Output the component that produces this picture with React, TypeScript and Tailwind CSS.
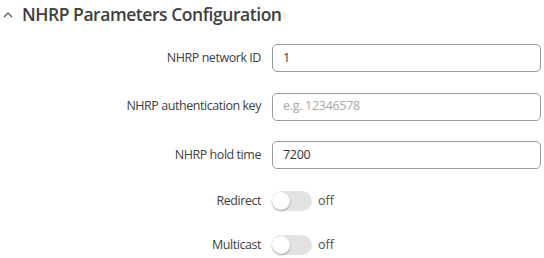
import React from "react";

function InputRow({ label, value, placeholder, h }: { label: string; value?: string; placeholder?: string; h: string }) {
  return (
    <div className={`flex items-center ${h}`}>
      <div className="w-[272px] pr-[11px] text-right text-[12.5px] tracking-[-0.45px] text-[#404040]">{label}</div>
      <div className="w-[269px] h-[28px] rounded-[5px] border border-[#9a9a9a] flex items-center px-[10px] text-[12.5px] tracking-[-0.3px]">
        {value ? <span className="text-[#333]">{value}</span> : <span className="text-[#a8a8a8]">{placeholder}</span>}
      </div>
    </div>
  );
}

function ToggleRow({ label, h }: { label: string; h: string }) {
  return (
    <div className={`flex items-center ${h}`}>
      <div className="w-[272px] pr-[11px] text-right text-[12.5px] tracking-[-0.45px] text-[#404040]">{label}</div>
      <div className="relative w-[40px] h-[20px] rounded-full bg-[#e2e2e2]">
        <div className="absolute left-0 top-[1px] w-[18px] h-[18px] rounded-full bg-white shadow-[0_1px_2px_rgba(0,0,0,0.35)]" />
      </div>
      <span className="ml-[6px] text-[12.5px] text-[#505050]">off</span>
    </div>
  );
}

export default function App() {
  return (
    <div className="w-[544px] h-[258px] bg-white overflow-hidden" style={{ fontFamily: '"Open Sans", sans-serif' }}>
      <div className="flex items-center h-[30px]">
        <svg width="10" height="8" viewBox="0 0 10 8" className="ml-[3px] mr-[9px]">
          <path d="M1 6 L5 2 L9 6" fill="none" stroke="#555" strokeWidth="1.2" />
        </svg>
        <span className="text-[17.5px] tracking-[-0.45px] font-semibold text-[#404040] leading-none">NHRP Parameters Configuration</span>
      </div>
      <div className="flex flex-col pt-[4px]">
        <InputRow label="NHRP network ID" value="1" h="h-[48px]" />
        <InputRow label="NHRP authentication key" placeholder="e.g. 12346578" h="h-[49px]" />
        <InputRow label="NHRP hold time" value="7200" h="h-[48px]" />
        <ToggleRow label="Redirect" h="h-[44px]" />
        <ToggleRow label="Multicast" h="h-[44px]" />
      </div>
    </div>
  );
}
